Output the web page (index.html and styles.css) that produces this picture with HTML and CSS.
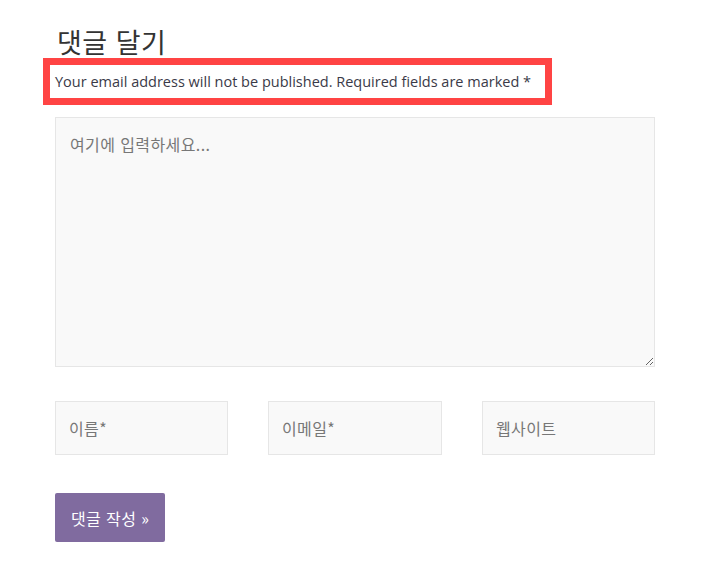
FILE: index.html
```html
<!DOCTYPE html>
<html lang="ko">
<head>
  <meta charset="UTF-8" />
  <meta name="viewport" content="width=device-width, initial-scale=1.0" />
  <title>댓글 달기</title>
  <link rel="stylesheet" href="styles.css">
</head>
<body>
  <div class="comment-respond">
    <h3 class="reply-title">댓글 달기</h3>
    <form class="comment-form">
      <p class="comment-notes">Your email address will not be published. Required fields are marked *</p>
      <textarea class="comment-text" placeholder="여기에 입력하세요..."></textarea>
      <div class="fields">
        <input type="text" placeholder="이름*" />
        <input type="email" placeholder="이메일*" />
        <input type="url" placeholder="웹사이트" />
      </div>
      <button type="submit" class="submit">댓글 작성 »</button>
    </form>
  </div>
</body>
</html>
```
FILE: styles.css
```css
body {
  margin: 0;
  background: #fff;
  font-family: "Open Sans", "Noto Sans CJK KR", sans-serif;
  color: #333;
}
.comment-respond {
  width: 600px;
  padding: 26px 0 0 55px;
}
.reply-title {
  margin: 0;
  padding-left: 2px;
  font-family: "Noto Sans CJK KR", sans-serif;
  font-size: 27px;
  font-weight: 400;
  letter-spacing: 0.5px;
  line-height: 32px;
  color: #333;
}
.comment-form {
  display: flex;
  flex-direction: column;
  align-items: flex-start;
}
.comment-notes {
  margin: 0 0 12px -12px;
  padding: 0 14px 0 5px;
  border: 7px solid #ff4444;
  font-size: 14.5px;
  line-height: 33px;
  color: #3a3a48;
}
.comment-text {
  box-sizing: border-box;
  width: 600px;
  height: 250px;
  padding: 14px;
  border: 1px solid #e6e6e6;
  background: #f9f9f9;
  font-family: "Noto Sans CJK KR", sans-serif;
  font-size: 16px;
  letter-spacing: 0.4px;
  line-height: 24px;
  color: #333;
  resize: vertical;
  outline: none;
}
.fields {
  display: grid;
  grid-template-columns: 173px 174px 173px;
  column-gap: 40px;
  margin-top: 34px;
  width: 600px;
}
.fields input {
  box-sizing: border-box;
  height: 54px;
  padding: 0 13px;
  border: 1px solid #e6e6e6;
  background: #f9f9f9;
  font-family: "Noto Sans CJK KR", sans-serif;
  font-size: 16px;
  letter-spacing: 0.4px;
  color: #333;
  outline: none;
}
::placeholder {
  color: #777;
  opacity: 1;
}
.submit {
  margin-top: 38px;
  height: 49px;
  padding: 0 16px;
  border: none;
  border-radius: 2px;
  background-color: #806b9f;
  color: #fff;
  font-family: "Noto Sans CJK KR", sans-serif;
  font-size: 16px;
  letter-spacing: 0.4px;
  cursor: pointer;
}
```
